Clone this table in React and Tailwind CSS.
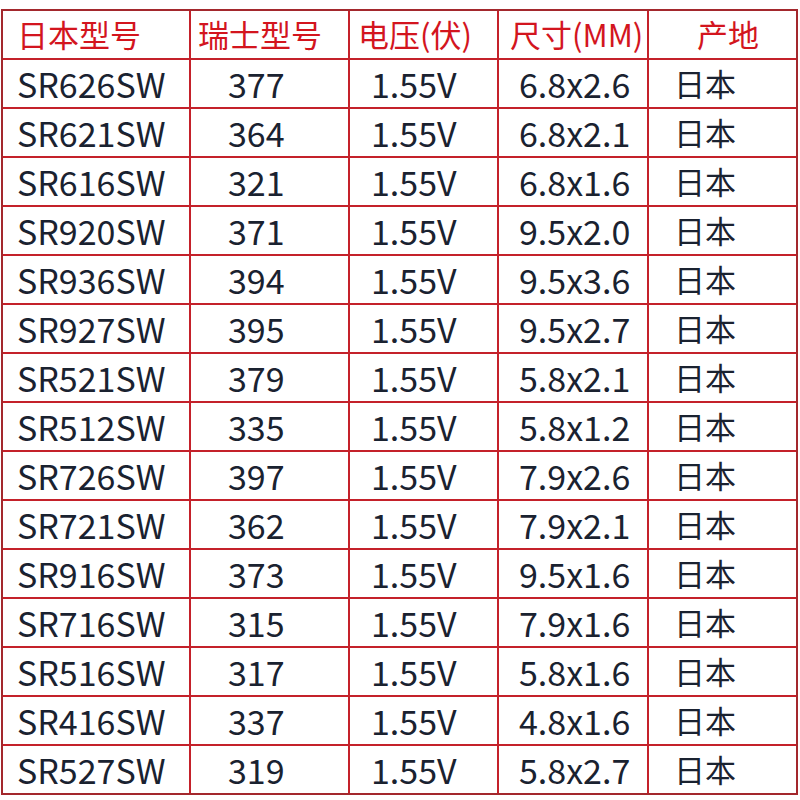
import React from "react";

const rows = [
  ["SR626SW", "377", "6.8x2.6"],
  ["SR621SW", "364", "6.8x2.1"],
  ["SR616SW", "321", "6.8x1.6"],
  ["SR920SW", "371", "9.5x2.0"],
  ["SR936SW", "394", "9.5x3.6"],
  ["SR927SW", "395", "9.5x2.7"],
  ["SR521SW", "379", "5.8x2.1"],
  ["SR512SW", "335", "5.8x1.2"],
  ["SR726SW", "397", "7.9x2.6"],
  ["SR721SW", "362", "7.9x2.1"],
  ["SR916SW", "373", "9.5x1.6"],
  ["SR716SW", "315", "7.9x1.6"],
  ["SR516SW", "317", "5.8x1.6"],
  ["SR416SW", "337", "4.8x1.6"],
  ["SR527SW", "319", "5.8x2.7"],
];

const font = { fontFamily: '"Noto Sans CJK SC", "Noto Sans", sans-serif' };

export default function App() {
  return (
    <div className="w-[800px] h-[800px] bg-white pt-[9px] pl-px" style={font}>
      <div className="w-[797px] border-2 border-[#a3282d] bg-[#c4212a] grid grid-cols-[186px_157px_147px_148px_147px] gap-[2px] auto-rows-[47px]">
        <div className="bg-white flex items-center pl-[14px] text-[31px] text-[#d3151e]">日本型号</div>
        <div className="bg-white flex items-center pl-[7px] text-[31px] text-[#d3151e]">瑞士型号</div>
        <div className="bg-white flex items-center pl-[8px] text-[31px] text-[#d3151e]">电压(伏)</div>
        <div className="bg-white flex items-center pl-[11px] text-[31px] text-[#d3151e]">尺寸(MM)</div>
        <div className="bg-white flex items-center pl-[48px] text-[31px] text-[#d3151e]">产地</div>
        {rows.map((r) => (
          <React.Fragment key={r[0]}>
            <div className="bg-white flex items-center pl-[14px] text-[34px] text-[#1a2230]">{r[0]}</div>
            <div className="bg-white flex items-center pl-[37px] text-[34px] text-[#1a2230]">{r[1]}</div>
            <div className="bg-white flex items-center pl-[21px] text-[34px] text-[#1a2230]">1.55V</div>
            <div className="bg-white flex items-center pl-[20px] text-[34px] text-[#1a2230]">{r[2]}</div>
            <div className="bg-white flex items-center pl-[25px] text-[31px] text-[#1a2230]">日本</div>
          </React.Fragment>
        ))}
      </div>
    </div>
  );
}
